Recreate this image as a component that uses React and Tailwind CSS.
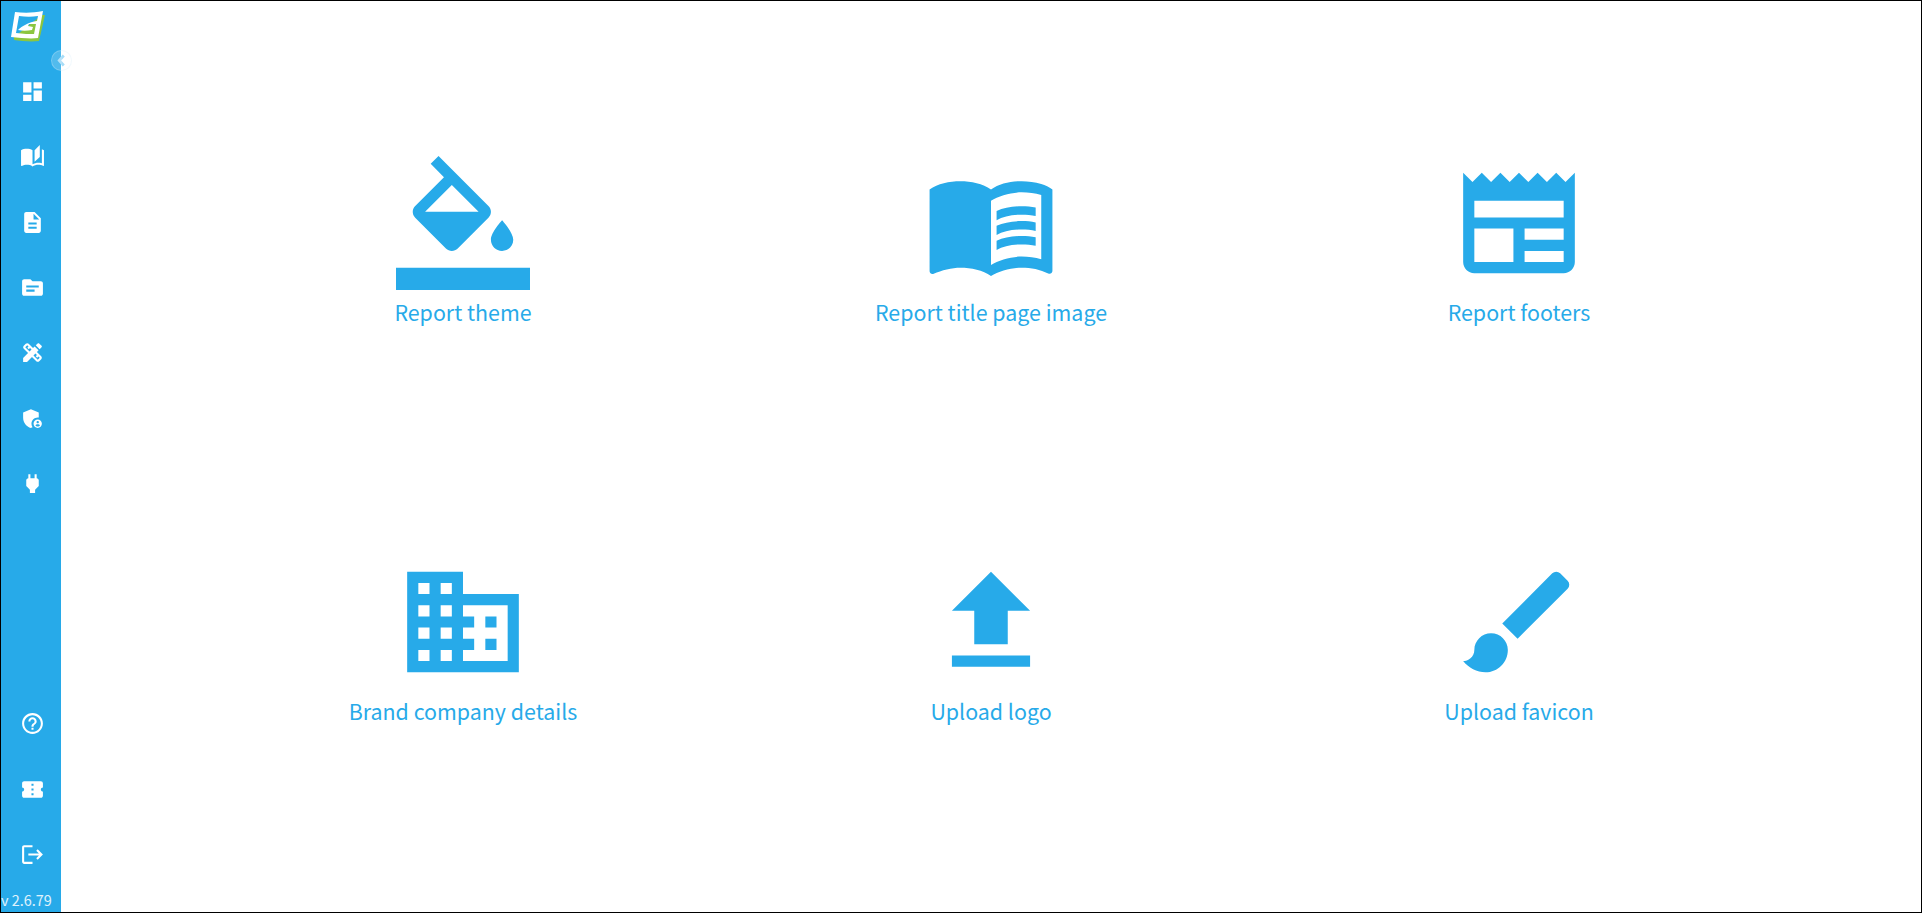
import React from "react";
import {
  MdDashboard,
  MdAutoStories,
  MdDescription,
  MdTopic,
  MdDesignServices,
  MdAdminPanelSettings,
  MdPower,
  MdHelpOutline,
  MdConfirmationNumber,
  MdLogout,
  MdMenuBook,
  MdNewspaper,
  MdDomain,
  MdFileUpload,
  MdBrush,
} from "react-icons/md";

// format_color_fill, the bar runs the full icon width here
const PaintBucket = ({ size }) => (
  <svg width={size} height={size} viewBox="0 0 24 24" fill="currentColor">
    <path d="M16.56 8.94L7.62 0 6.21 1.41l2.38 2.38-5.15 5.15c-.59.59-.59 1.54 0 2.12l5.5 5.5c.29.29.68.44 1.06.44s.77-.15 1.06-.44l5.5-5.5c.59-.58.59-1.53 0-2.12zM5.21 10L10 5.21 14.79 10H5.21zM19 11.5s-2 2.17-2 3.5c0 1.1.9 2 2 2s2-.9 2-2c0-1.33-2-3.5-2-3.5z" />
    <path d="M0 20h24v4H0z" />
  </svg>
);

const topNav = [MdDashboard, MdAutoStories, MdDescription, MdTopic, MdDesignServices, MdAdminPanelSettings, MdPower];
const bottomNav = [MdHelpOutline, MdConfirmationNumber, MdLogout];

const tiles = [
  { icon: PaintBucket, label: "Report theme" },
  { icon: MdMenuBook, label: "Report title page image" },
  { icon: MdNewspaper, label: "Report footers" },
  { icon: MdDomain, label: "Brand company details" },
  { icon: MdFileUpload, label: "Upload logo" },
  { icon: MdBrush, label: "Upload favicon" },
];

const Logo = () => (
  <svg width="34" height="32" viewBox="0 0 34 32">
    <path d="M31 5 L34 5 L28 31 C20 32 10 31 3 30 L3 27 Z" fill="#8cc63f" />
    <path
      fillRule="evenodd"
      d="M4 2 C13 3 22 3 32 1 L27 28 C20 29 10 28 0 27 Z M8 6 L5 23 C12 24 19 24 23 24 L25 14 L18 14 L17 16 L22 17 L21 20 C16 21 11 21 7 20 C11 16 18 12 26 11 L27 6 C21 7 15 7 8 6 Z"
      fill="#ffffff"
    />
  </svg>
);

// chevron reads pale over the sidebar, blue past its edge
const CollapseChevron = () => (
  <svg width="21" height="21" viewBox="0 0 21 21" fill="none">
    <defs>
      <linearGradient id="chev" gradientUnits="userSpaceOnUse" x1="0" y1="0" x2="21" y2="0">
        <stop offset="0.5" stopColor="#b4e1f8" />
        <stop offset="0.5" stopColor="#a6dcf7" />
      </linearGradient>
    </defs>
    <path d="M13 5 L8 10.5 L13 16" stroke="url(#chev)" strokeWidth="3" />
  </svg>
);

const Sidebar = () => (
  <aside className="relative w-[60px] shrink-0 flex flex-col bg-[#27aae9] text-white">
    <div className="h-[38px] pt-[9px] pl-[10px]">
      <Logo />
    </div>
    {/* collapse handle */}
    <div className="absolute left-[50px] top-[49px] w-[21px] h-[21px] rounded-full bg-white/20 border border-[#cfeafa]/30 flex items-center justify-center">
      <CollapseChevron />
    </div>
    <nav className="flex flex-col pl-[2px] mt-[20px]">
      {topNav.map((Icon, i) => (
        <div key={i} className="h-[65.3px] flex items-center justify-center">
          <Icon size={25} />
        </div>
      ))}
    </nav>
    <nav className="flex flex-col pl-[2px] mt-auto">
      {bottomNav.map((Icon, i) => (
        <div key={i} className="h-[65.3px] flex items-center justify-center">
          <Icon size={25} />
        </div>
      ))}
    </nav>
    <div className="h-[25px] w-full text-[14.4px] leading-5 pt-[3px] whitespace-nowrap text-white/85">v 2.6.79</div>
  </aside>
);

export default function App() {
  return (
    <div className="h-[913px] w-[1922px] flex border border-black bg-white font-['Noto_Sans_CJK_JP','Noto_Sans',sans-serif] overflow-hidden">
      <Sidebar />
      <main className="flex-1 px-[138px] pt-[155px] grid grid-cols-3 auto-rows-[399px]">
        {tiles.map(({ icon: Icon, label }) => (
          <button key={label} className="flex flex-col items-center h-fit text-[#27aae9]">
            <Icon size={134} />
            <span className="text-[21.4px] leading-7 mt-[8px]">{label}</span>
          </button>
        ))}
      </main>
    </div>
  );
}
